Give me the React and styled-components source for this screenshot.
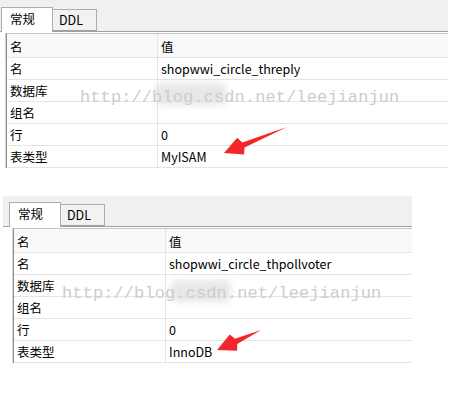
import React from 'react';
import styled, {createGlobalStyle} from 'styled-components';

const GlobalStyle = createGlobalStyle`
  html, body {
    margin: 0;
    padding: 0;
    background: #ffffff;
  }
  body {
    font-family: "Noto Sans CJK SC", "Noto Sans", sans-serif;
  }
`;

const Page = styled.div`
  width: 450px;
  height: 395px;
  background: #ffffff;
  display: flex;
  flex-direction: column;
  overflow: hidden;
`;

const Panel = styled.div`
  position: relative;
  width: ${(props) => props.$width}px;
  margin-left: ${(props) => props.$left}px;
  margin-top: ${(props) => props.$top}px;
`;

const TabBar = styled.div`
  box-sizing: border-box;
  height: ${(props) => props.$height}px;
  background: #f0f0f0;
  border-bottom: 1px solid #a0a0a0;
  display: flex;
  align-items: flex-end;
  padding-left: ${(props) => props.$pad}px;
`;

const Tab = styled.div`
  box-sizing: border-box;
  width: ${(props) => (props.$active ? 52 : 44)}px;
  height: ${(props) => (props.$active ? 25 : 22)}px;
  margin-bottom: ${(props) => (props.$active ? -1 : 0)}px;
  background: ${(props) => (props.$active ? '#ffffff' : '#f2f2f2')};
  border: 1px solid #adadad;
  border-bottom: ${(props) => (props.$active ? 'none' : '1px solid #a0a0a0')};
  border-left: ${(props) => (props.$first ? '1px solid #adadad' : 'none')};
  padding-left: ${(props) => (props.$active ? 8 : 6)}px;
  padding-top: ${(props) => (props.$active ? 1 : 0)}px;
  font-size: 12.5px;
  line-height: 20px;
  color: #000000;
`;

const Body = styled.div`
  padding-top: 1px;
  padding-left: ${(props) => props.$pad}px;
`;

const Table = styled.div`
  border-top: 1px solid #c4c4c4;
  border-left: 1px solid #8c8c8c;
  box-shadow: -1px 0 0 #d8d8d8;
`;

const Row = styled.div`
  box-sizing: border-box;
  display: grid;
  grid-template-columns: ${(props) => props.$col}px 1fr;
  height: ${(props) => (props.$head ? 24 : 22)}px;
  background: ${(props) => (props.$head ? '#f9f9f9' : '#ffffff')};
  border-bottom: 1px solid #e4e4e4;
`;

const Cell = styled.div`
  box-sizing: border-box;
  padding-left: 3px;
  padding-top: ${(props) => (props.$head ? 2 : 0)}px;
  border-right: ${(props) => (props.$value ? 'none' : '1px solid #e4e4e4')};
  font-size: 12.5px;
  line-height: 21px;
  color: #000000;
  white-space: nowrap;
`;

const Watermark = styled.div`
  position: absolute;
  left: ${(props) => props.$x}px;
  top: ${(props) => props.$y}px;
  font-family: "Liberation Mono", "DejaVu Sans Mono", monospace;
  font-size: 17px;
  line-height: 17px;
  color: #cdcdcd;
  letter-spacing: 0.1px;
  white-space: nowrap;
  pointer-events: none;
`;

const Smudge = styled.div`
  position: absolute;
  left: ${(props) => props.$x}px;
  top: ${(props) => props.$y}px;
  width: ${(props) => props.$w}px;
  height: ${(props) => props.$h}px;
  background: #e2e2e2;
  border-radius: 6px;
  filter: blur(3px);
  opacity: 0.8;
`;

const ArrowSvg = styled.svg`
  position: absolute;
  left: 0;
  top: 0;
  overflow: visible;
  pointer-events: none;
`;

function arrowPoints(tip, tail) {
  const dx = tail[0] - tip[0];
  const dy = tail[1] - tip[1];
  const len = Math.hypot(dx, dy);
  const ux = dx / len;
  const uy = dy / len;
  const nx = -uy;
  const ny = ux;
  const head = 21;
  const half = 9;
  const shaft = 2.8;
  const bx = tip[0] + ux * head;
  const by = tip[1] + uy * head;
  const nb = [bx - ux * 3, by - uy * 3];
  const pts = [
    tip,
    [nb[0] + nx * half, nb[1] + ny * half],
    [bx + nx * shaft, by + ny * shaft],
    tail,
    [bx - nx * shaft, by - ny * shaft],
    [nb[0] - nx * half, nb[1] - ny * half],
  ];
  return pts.map((p) => `${p[0].toFixed(1)},${p[1].toFixed(1)}`).join(' ');
}

const Arrow = ({tip, tail}) => (
  <ArrowSvg width="1" height="1">
    <polygon points={arrowPoints(tip, tail)} fill="#f2262b" />
  </ArrowSvg>
);

const TableView = ({p}) => (
  <Panel $width={p.width} $left={p.left} $top={p.top}>
    <TabBar $height={p.barHeight} $pad={p.tabPad}>
      <Tab $active $first>常规</Tab>
      <Tab>DDL</Tab>
    </TabBar>
    <Body $pad={p.bodyPad}>
      <Table>
        <Row $head $col={p.col}>
          <Cell $head>名</Cell>
          <Cell $head $value>值</Cell>
        </Row>
        {p.rows.map(([k, v]) => (
          <Row key={k} $col={p.col}>
            <Cell>{k}</Cell>
            <Cell $value>{v}</Cell>
          </Row>
        ))}
      </Table>
    </Body>
    <Smudge $x={p.smudge[0]} $y={p.smudge[1]} $w={p.smudge[2]} $h={p.smudge[3]} />
    <Watermark $x={p.mark[0]} $y={p.mark[1]}>http://blog.csdn.net/leejianjun</Watermark>
    <Arrow tip={p.tip} tail={p.tail} />
  </Panel>
);

const panels = [
  {
    width: 448,
    left: 0,
    top: 0,
    barHeight: 32,
    tabPad: 1,
    bodyPad: 6,
    col: 151,
    rows: [
      ['名', 'shopwwi_circle_threply'],
      ['数据库', ''],
      ['组名', ''],
      ['行', '0'],
      ['表类型', 'MyISAM'],
    ],
    smudge: [155, 83, 72, 22],
    mark: [80, 89],
    tip: [224, 153],
    tail: [287, 127],
  },
  {
    width: 409,
    left: 3,
    top: 28,
    barHeight: 31,
    tabPad: 6,
    bodyPad: 10,
    col: 152,
    rows: [
      ['名', 'shopwwi_circle_thpollvoter'],
      ['数据库', ''],
      ['组名', ''],
      ['行', '0'],
      ['表类型', 'InnoDB'],
    ],
    smudge: [168, 84, 60, 22],
    mark: [59, 89],
    tip: [214, 154],
    tail: [258, 134],
  },
];

export default function App() {
  return (
    <Page>
      <GlobalStyle />
      {panels.map((p, i) => (
        <TableView key={i} p={p} />
      ))}
    </Page>
  );
}
